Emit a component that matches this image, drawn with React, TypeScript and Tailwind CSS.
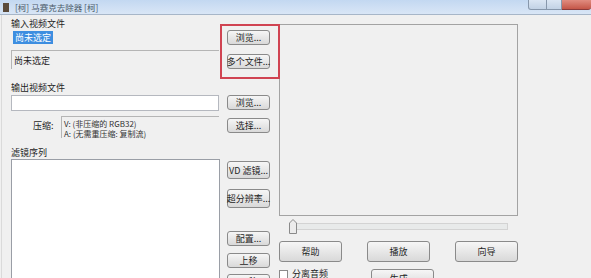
import React from "react";

const font = { fontFamily: '"Noto Sans CJK SC", "Noto Sans", sans-serif' };

function Btn({ label, cls }: { label: string; cls: string }) {
  return (
    <div
      className={`flex items-center justify-center whitespace-nowrap rounded-[3px] border border-[#8a8a8a] bg-gradient-to-b from-[#f6f6f6] to-[#d9d9d9] leading-none text-[#1e1e1e] ${cls}`}
    >
      {label}
    </div>
  );
}

export default function App() {
  return (
    <div
      className="relative h-[278px] w-[591px] overflow-hidden bg-[#f0f0f0] text-[9px] text-[#1e1e1e]"
      style={font}
    >
      {/* title bar */}
      <div className="flex h-[15px] items-center border-b border-[#a7b6c8] bg-gradient-to-b from-[#c3d8f1] to-[#d9e6f6] pl-[3px]">
        <div className="h-[9px] w-[6px] bg-[#5a4a3a]" />
        <span className="ml-[6px] text-[8.5px] leading-none text-[#4a5a6a]">[柯] 马赛克去除器 [柯]</span>
      </div>
      <div className="absolute right-0 top-0 flex h-[10px]">
        <div className="w-[19px] rounded-bl-[3px] border border-t-0 border-[#8797ab] bg-gradient-to-b from-[#dbe6f3] to-[#c2d2e5]" />
        <div className="w-[15px] border-b border-r border-[#8797ab] bg-gradient-to-b from-[#dbe6f3] to-[#c2d2e5]" />
        <div className="w-[29px] rounded-br-[3px] border-b border-[#8a3b3b] bg-gradient-to-b from-[#e08c80] to-[#c45648]" />
      </div>

      <div className="flex">
        {/* left column */}
        <div className="ml-[1px] flex w-[278px] flex-col border-l border-[#dadada] pl-[9px]">
          <div className="mt-[2px] h-[13px] leading-[13px]">输入视频文件</div>
          <div className="flex h-[17px]">
            <div className="w-[208px] pl-[2px] pt-[1px]">
              <span className="inline-block bg-[#3d8ee0] px-[2px] py-[1px] leading-[11px] text-white">尚未选定</span>
            </div>
            <Btn label="浏览..." cls="ml-[8px] h-[15px] w-[43px]" />
          </div>
          <div className="mt-[3px] flex h-[19px]">
            <div className="w-[208px] border-l border-t border-[#b5b5b5] pl-[2px] pt-[4px] leading-[12px]">
              尚未选定
            </div>
            <Btn label="多个文件..." cls="ml-[8px] mt-[4px] h-[15px] w-[43px]" />
          </div>

          <div className="mt-[12px] h-[13px] leading-[13px]">输出视频文件</div>
          <div className="mt-[1px] flex h-[16px]">
            <div className="w-[208px] border border-[#b5b8bf] bg-white" />
            <Btn label="浏览..." cls="ml-[8px] h-[15px] w-[43px]" />
          </div>

          <div className="mt-[5px] flex h-[22px]">
            <div className="flex w-[208px]">
              <div className="w-[50px] pl-[22px] pt-[3px] leading-[14px]">压缩:</div>
              <div className="flex-1 border-l border-t border-[#b5b5b5] pl-[2px] pt-[2px] text-[8px] leading-[10px] text-[#333]">
                <div>V: (非压缩的 RGB32)</div>
                <div>A: (无需重压缩: 复制流)</div>
              </div>
            </div>
            <Btn label="选择..." cls="ml-[8px] mt-[2px] h-[15px] w-[43px]" />
          </div>

          <div className="mt-[8px] h-[13px] leading-[13px]">滤镜序列</div>
          <div className="flex">
            <div className="h-[130px] w-[209px] border border-[#9a9ea6] bg-white" />
            <div className="ml-[7px] flex flex-col">
              <Btn label="VD 滤镜..." cls="mt-[2px] h-[18px] w-[43px]" />
              <Btn label="超分辨率..." cls="mt-[10px] h-[19px] w-[43px]" />
              <Btn label="配置..." cls="mt-[23px] h-[15px] w-[43px]" />
              <Btn label="上移" cls="mt-[7px] h-[15px] w-[43px]" />
              <Btn label="下移" cls="mt-[6px] h-[15px] w-[43px]" />
            </div>
          </div>
        </div>

        {/* right column */}
        <div className="flex w-[239px] flex-col">
          <div className="mt-[9px] h-[192px] w-[239px] border border-[#a3a3a3]" />
          <div className="relative mt-[3px] h-[15px]">
            <div className="absolute left-[13px] top-[4px] h-[7px] w-[216px] border border-[#d3d3d3] bg-[#e8eaea]" />
            <svg className="absolute left-[10px] top-0" width="8" height="15" viewBox="0 0 8 15">
              <path d="M0.5 4 L4 0.5 L7.5 4 V14.5 H0.5 Z" fill="#ececec" stroke="#8a8a8a" />
            </svg>
          </div>
          <div className="mt-[7px] flex h-[21px] justify-between">
            <Btn label="帮助" cls="h-[21px] w-[63px]" />
            <Btn label="播放" cls="h-[21px] w-[63px]" />
            <Btn label="向导" cls="h-[21px] w-[63px]" />
          </div>
          <div className="mt-[7px] flex h-[12px] items-start">
            <div className="mt-[1px] h-[9px] w-[9px] border border-[#8a8a8a] bg-white" />
            <span className="ml-[4px] leading-[10px]">分离音频</span>
            <Btn label="生成..." cls="ml-[43px] h-[18px] w-[63px]" />
          </div>
        </div>
      </div>

      {/* red annotation */}
      <div className="absolute left-[220px] top-[24px] h-[55px] w-[60px] border-2 border-[#d04452]" />
    </div>
  );
}
